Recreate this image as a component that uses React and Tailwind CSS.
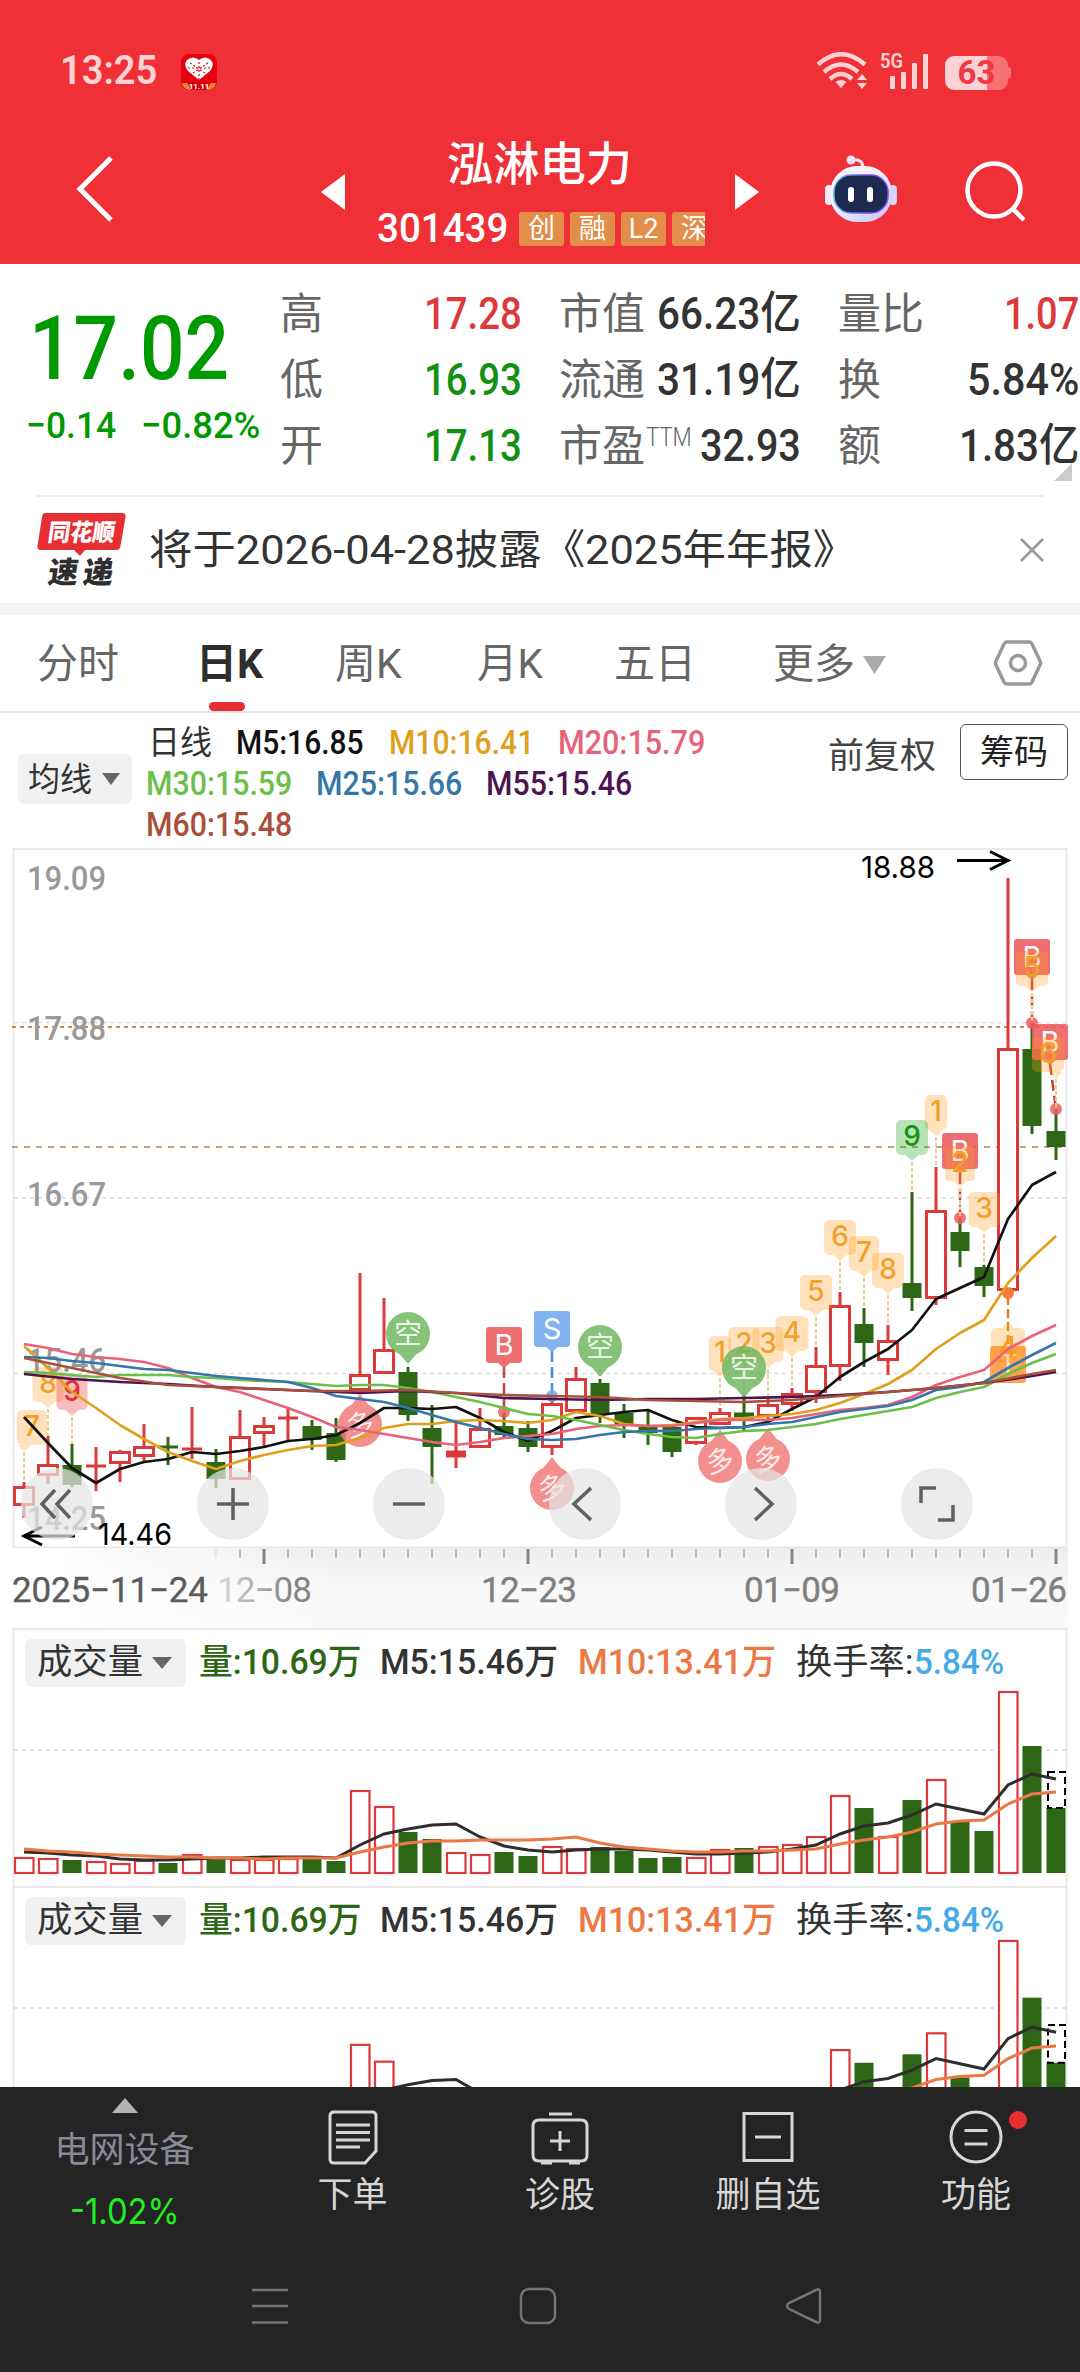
import { useLayoutEffect, useRef, useState } from 'react';
import clsx from 'clsx';

const RED = '#dc3a3a';
const GREEN = '#2d6614';

// [color, high, body top, body bottom, low]
const candles = [
  ['r', 634, 638, 658, 670], ['r', 588, 616, 628, 636], ['g', 596, 617, 637, 639], ['r', 599, 618, 618, 643],
  ['r', 602, 603, 616, 634], ['r', 576, 598, 609, 613], ['g', 589, 599, 599, 617], ['r', 559, 601, 601, 611],
  ['g', 601, 614, 631, 640], ['r', 562, 588, 632, 632], ['r', 569, 577, 586, 598], ['r', 559, 570, 570, 592],
  ['g', 572, 578, 592, 602], ['g', 570, 585, 612, 614], ['r', 425, 526, 543, 543], ['r', 450, 501, 526, 526],
  ['g', 519, 524, 567, 573], ['g', 557, 580, 599, 636], ['r', 572, 604, 608, 620], ['r', 560, 580, 600, 600],
  ['g', 565, 578, 587, 591], ['g', 573, 580, 599, 604], ['r', 552, 555, 600, 607], ['r', 519, 530, 564, 564],
  ['g', 531, 535, 566, 575], ['g', 556, 565, 576, 590], ['g', 562, 579, 585, 597], ['g', 579, 579, 604, 609],
  ['r', 569, 569, 596, 597], ['r', 560, 564, 577, 577], ['g', 548, 566, 570, 582], ['r', 551, 556, 569, 577],
  ['r', 540, 545, 557, 563], ['r', 499, 517, 545, 555], ['r', 444, 457, 519, 533], ['g', 460, 476, 495, 519],
  ['r', 477, 492, 513, 527], ['g', 344, 435, 450, 463], ['r', 319, 362, 451, 457], ['g', 370, 384, 403, 419],
  ['g', 417, 419, 438, 449], ['r', 30, 200, 443, 444], ['g', 175, 201, 278, 286], ['g', 261, 283, 299, 312],
];

const maLines = [
  { color: '#111111', ys: [569, 595, 620, 635, 621, 614, 611, 604, 606, 603, 599, 593, 591, 587, 575, 560, 560, 561, 559, 570, 584, 593, 583, 570, 567, 564, 562, 572, 579, 580, 579, 574, 561, 549, 529, 514, 501, 482, 451, 440, 429, 371, 337, 324] },
  { color: '#e0a01e', ys: [498, 520, 544, 560, 577, 591, 604, 613, 621, 613, 607, 602, 598, 597, 590, 580, 576, 576, 573, 572, 573, 575, 572, 564, 568, 576, 578, 577, 574, 571, 570, 568, 566, 562, 555, 546, 536, 522, 501, 485, 472, 435, 410, 388] },
  { color: '#e8637a', ys: [496, 500, 506, 509, 511, 514, 520, 530, 539, 544, 552, 560, 569, 579, 582, 586, 590, 594, 597, 594, 590, 588, 586, 581, 578, 577, 578, 578, 575, 572, 572, 572, 570, 566, 562, 560, 557, 549, 537, 529, 522, 501, 488, 477] },
  { color: '#6cc04a', ys: [524, 525, 527, 529, 527, 527, 527, 529, 530, 532, 533, 534, 536, 538, 537, 537, 540, 544, 549, 554, 560, 566, 568, 572, 577, 582, 586, 589, 590, 586, 583, 582, 579, 576, 571, 567, 563, 559, 550, 544, 539, 526, 515, 506] },
  { color: '#3477a8', ys: [509, 510, 513, 515, 518, 521, 522, 525, 528, 530, 532, 534, 540, 548, 551, 554, 560, 567, 574, 580, 586, 591, 592, 591, 587, 584, 583, 583, 581, 580, 579, 576, 574, 569, 564, 561, 558, 552, 542, 539, 534, 520, 507, 495] },
  { color: '#4c1450', step: 2, ys: [526, 531, 534, 536, 539, 541, 543, 545, 543, 545, 550, 551, 552, 551, 551, 550, 549, 547, 544, 540, 535, 528, 524] },
  { color: '#a8503c', step: 2, ys: [510, 520, 530, 537, 539, 541, 543, 543, 542, 545, 547, 548, 549, 552, 553, 554, 552, 548, 544, 540, 535, 526, 522] },
];

const volumes = [16, 15, 13, 12, 10, 13, 10, 19, 15, 14, 14, 15, 14, 12, 83, 67, 41, 34, 21, 19, 21, 17, 27, 25, 26, 22, 15, 16, 16, 24, 25, 27, 29, 37, 78, 65, 37, 73, 94, 51, 42, 182, 127, 65];
const volMa5 = [21, 20, 18, 17, 14, 13, 13, 14, 15, 15, 16, 16, 16, 15, 28, 39, 44, 48, 49, 36, 27, 23, 21, 23, 24, 24, 23, 21, 19, 19, 20, 21, 24, 28, 39, 47, 50, 58, 69, 64, 59, 88, 99, 94];
const volMa10 = [24, 22, 21, 19, 18, 17, 16, 16, 15, 15, 14, 15, 15, 15, 21, 26, 30, 32, 32, 33, 33, 33, 34, 36, 30, 26, 24, 22, 21, 21, 22, 22, 23, 24, 29, 33, 36, 41, 49, 52, 53, 69, 79, 81];

// numbered count tags: [label, center x, top, width, line x, line end]
const counts = [
  ['7', 32, 562, 30, 24, 634], ['8', 48, 519, 31, 48, 588],
  ['1', 720, 488, 22, 720, 560], ['2', 744, 479, 31, 744, 548], ['3', 768, 479, 31, 768, 551],
  ['4', 792, 468, 33, 792, 540], ['5', 816, 427, 32, 816, 499], ['6', 840, 372, 32, 840, 444],
  ['7', 864, 388, 30, 864, 460], ['8', 888, 405, 32, 888, 477], ['1', 936, 247, 22, 936, 319],
  ['2', 960, 298, 30, 960, 370], ['3', 984, 344, 31, 984, 417],
  ['5', 1032, 103, 32, 1032, 175], ['6', 1048, 189, 32, 1056, 261],
];

const trades = [
  ['B', 504, 479, 504, 564], ['S', 552, 463, 552, 548], ['B', 960, 285, 960, 370],
  ['B', 1032, 91, 1032, 175], ['B', 1050, 176, 1056, 261],
];

const xAt = (i) => 24 + i * 24;

// squeezes or stretches one line of text to an exact width
function Fit({ w, className, children }) {
  const ref = useRef(null);
  const [scale, setScale] = useState(1);
  useLayoutEffect(() => {
    setScale(w / ref.current.offsetWidth);
  }, [w, children]);
  return (
    <span className={clsx('block shrink-0 whitespace-nowrap', className)} style={{ width: w }}>
      <span ref={ref} className="inline-block origin-left" style={{ transform: `scaleX(${scale})` }}>{children}</span>
    </span>
  );
}

function StatusBar() {
  return (
    <div className="flex h-[94px] items-end pb-1 pl-[60px] pr-[69px] text-[#ffd3d5]">
      <Fit w={97} className="text-[40px] leading-[38px] font-semibold">13:25</Fit>
      <svg className="ml-[24px] h-9 w-9 overflow-visible" viewBox="0 0 36 36">
        <rect width="36" height="36" rx="8" fill="#e60012" />
        <path d="M1 29h34a8 8 0 0 1-8 7H9a8 8 0 0 1-8-7z" fill="#f0813a" />
        <path d="M6 28h24l-4 8H10z" fill="#d8000f" />
        <path d="M18 26 7 17Q2 11 6 6q6-5 12 0 6-5 12 0 4 5-1 11z" fill="#fff" />
        <path d="M9 9l18 12M27 9 9 21M18 8v18M7 14h22" stroke="#e60012" strokeWidth="1.2" strokeDasharray="2 2" />
        <text x="18" y="35" fontSize="8" fontWeight="700" fill="#fff" textAnchor="middle">11.11</text>
      </svg>
      <svg className="ml-auto h-[38px] w-[52px]" viewBox="0 0 52 38" fill="none" stroke="#ffd3d5" strokeWidth="4.5">
        <path d="M2 12.500Q25-8 49 12.500M8 20q17-15 34 0M14 27q11-10 22 0" />
        <path d="M19.500 30q6-4 11 0l-5.500 6z" fill="#ffd3d5" stroke="none" />
        <path d="M41 28l5-6 5 6zM41 31l5 6 5-6z" fill="#ffd3d5" stroke="none" />
      </svg>
      <svg className="ml-3 h-[38px] w-[50px] overflow-visible" viewBox="0 0 50 38" fill="#ffd3d5">
        <text x="0" y="16" fontSize="21" fontWeight="600" textLength="23" lengthAdjust="spacingAndGlyphs">5G</text>
        <rect x="10" y="24" width="5" height="13" rx="1" />
        <rect x="21" y="20" width="5" height="17" rx="1" />
        <rect x="32" y="11" width="5" height="26" rx="1" />
        <rect x="43" y="2" width="5" height="35" rx="1" />
      </svg>
      <div className="ml-[15px] flex h-[34px] w-[63px] items-center justify-center rounded-[9px] bg-linear-to-r from-[#ffd3d5] from-66% to-[#f87175] to-66% text-[33px] leading-[34px] font-bold text-[#ee3a40]">63</div>
      <div className="mb-[11px] h-3 w-[3px] rounded-r bg-[#f87175]" />
    </div>
  );
}

function Header() {
  return (
    <header className="flex h-[170px] text-white">
      <svg className="mt-[61px] ml-[75px] h-[68px] w-[40px]" viewBox="0 0 40 68" fill="none" stroke="#fff" strokeWidth="5">
        <path d="M36 3 5 34l31 31" />
      </svg>
      <svg className="mt-20 ml-[206px] h-9 w-6" viewBox="0 0 24 36" fill="#fff"><path d="M24 0v36L0 18z" /></svg>
      <div className="ml-8 w-[328px] overflow-hidden">
        <div className="ml-[70px] mt-[41px]"><Fit w={185} className="text-[46px] leading-[58px] font-medium">泓淋电力</Fit></div>
        <div className="mt-[17px] flex items-center">
          <Fit w={131} className="text-[40px] leading-[38px] font-medium">301439</Fit>
          <div className="ml-[11px] flex gap-1.5 text-[27px] leading-[34px]">
            {['创', '融', 'L2', '深'].map((t) => (
              <span key={t} className="h-[34px] w-[45px] shrink-0 rounded-[3px] bg-[#e28d4a] text-center">{t}</span>
            ))}
          </div>
        </div>
      </div>
      <svg className="mt-20 ml-[30px] h-9 w-6" viewBox="0 0 24 36" fill="#fff"><path d="M0 0v36l24-18z" /></svg>
      <svg className="mt-[61px] ml-[65px] h-[70px] w-[74px]" viewBox="0 0 74 70">
        <defs>
          <linearGradient id="shell" x1="0" y1="0" x2="1" y2="1">
            <stop offset="0.4" stopColor="#f4f3ff" />
            <stop offset="1" stopColor="#bcc0f4" />
          </linearGradient>
          <linearGradient id="rim" x1="0" x2="1">
            <stop offset="0" stopColor="#5fb4dc" />
            <stop offset="0.6" stopColor="#7a4cf0" />
          </linearGradient>
        </defs>
        <path d="M28 5q11-2 11 9" fill="none" stroke="#f1e6fb" strokeWidth="3" />
        <circle cx="27" cy="5" r="4.500" fill="#efe0f5" />
        <rect x="1" y="30" width="8" height="20" rx="4" fill="#eeeeff" />
        <rect x="65" y="30" width="8" height="20" rx="4" fill="#d6d6fa" />
        <rect x="6" y="11" width="62" height="56" rx="27" fill="url(#shell)" />
        <rect x="10" y="20" width="54" height="38" rx="17" fill="#1d2a50" stroke="url(#rim)" strokeWidth="1.500" />
        <rect x="24" y="32" width="6" height="15" rx="3" fill="#fff" />
        <rect x="43" y="32" width="6" height="15" rx="3" fill="#fff" />
      </svg>
      <svg className="mt-[65px] ml-[66px] h-[64px] w-[64px]" viewBox="0 0 64 64" fill="none" stroke="#fff" strokeWidth="4.500">
        <circle cx="30" cy="31" r="26.500" />
        <path d="M48 49l12 12" />
      </svg>
    </header>
  );
}

function Quote() {
  const cell = 'text-[45px] leading-[66px] font-medium';
  const label = 'w-[86px] text-[43px] leading-[66px] text-[#666]';
  return (
    <section className="relative flex h-[231px] pt-[17px] text-[#333]">
      <div className="w-[280px] pt-4 text-[#009900]">
        <Fit w={200} className="ml-[29px] text-[89px] leading-[104px] font-medium">17.02</Fit>
        <div className="mt-[5px] flex text-[37px] leading-10 font-medium">
          <Fit w={90} className="ml-[26px]">−0.14</Fit>
          <Fit w={119} className="ml-[25px]">−0.82%</Fit>
        </div>
      </div>
      <div className={label}>
        <div>高</div><div>低</div><div>开</div>
      </div>
      <div className={clsx('ml-[58px] text-[#119011]', cell)}>
        <Fit w={98} className="text-[#dc3a3a]">17.28</Fit>
        <Fit w={98}>16.93</Fit>
        <Fit w={98}>17.13</Fit>
      </div>
      <div className="ml-[37px] w-[242px]">
        <div className="flex"><span className={label}>市值</span><Fit w={144} className={clsx('ml-auto', cell)}>66.23亿</Fit></div>
        <div className="flex"><span className={label}>流通</span><Fit w={144} className={clsx('ml-auto', cell)}>31.19亿</Fit></div>
        <div className="flex">
          <span className={label}>市盈</span>
          <Fit w={46} className="ml-px text-[25px] leading-[50px] font-light text-[#666]">TTM</Fit>
          <Fit w={101} className={clsx('ml-auto', cell)}>32.93</Fit>
        </div>
      </div>
      <div className="ml-[37px] w-[241px]">
        <div className="flex"><span className={label}>量比</span><Fit w={75} className={clsx('ml-auto text-[#dc3a3a]', cell)}>1.07</Fit></div>
        <div className="flex"><span className={label}>换</span><Fit w={112} className={clsx('ml-auto', cell)}>5.84%</Fit></div>
        <div className="flex"><span className={label}>额</span><Fit w={120} className={clsx('ml-auto', cell)}>1.83亿</Fit></div>
      </div>
      <svg className="absolute top-[199px] left-[1054px] h-[18px] w-[18px]" viewBox="0 0 18 18" fill="#ccc"><path d="M18 0v18H0z" /></svg>
    </section>
  );
}

function Notice() {
  return (
    <section className="mx-9 flex h-[108px] items-start border-t-2 border-[#eee]">
      <svg className="mt-[15px] h-[82px] w-[92px] overflow-visible" viewBox="0 0 92 82">
        <path d="M9 1h77q4 0 3.500 4l-5 29q-.5 4-4.500 4H49l-5 6-6-6H5q-4 0-3.500-4L6 5q.5-4 3-4z" fill="#e62e33" />
        <g transform="skewX(-8)" fontWeight="900">
          <text x="15" y="29" fontSize="24" fill="#fff" textLength="67" lengthAdjust="spacingAndGlyphs">同花顺</text>
          <text x="21" y="71" fontSize="30" fill="#2e2e2e" textLength="65" lengthAdjust="spacing">速递</text>
        </g>
      </svg>
      <Fit w={707} className="ml-[21px] pt-5 text-[41px] leading-[66px] text-[#333]">将于2026-04-28披露《2025年年报》</Fit>
      <svg className="mt-[41px] ml-auto h-6 w-6" viewBox="0 0 24 24" stroke="#999" strokeWidth="2.500"><path d="M1 1l22 22M23 1 1 23" /></svg>
    </section>
  );
}

function Tabs() {
  return (
    <nav className="flex h-[110px] items-center border-t-[12px] border-b-2 border-t-[#f4f4f4] border-b-[#e6e6e6] pt-1 text-[41px] text-[#666]">
      <Fit w={82} className="ml-[37px]">分时</Fit>
      <div className="relative ml-[77px] font-bold text-[#2e2e2e]">
        <Fit w={67}>日K</Fit>
        <div className="absolute -bottom-[15px] left-[13px] h-[9px] w-9 rounded-full bg-[#e62e33]" />
      </div>
      <Fit w={67} className="ml-[72px]">周K</Fit>
      <Fit w={66} className="ml-[75px]">月K</Fit>
      <Fit w={82} className="ml-[71px]">五日</Fit>
      <Fit w={82} className="ml-[77px]">更多</Fit>
      <svg className="ml-2 h-[18px] w-[23px]" viewBox="0 0 23 18" fill="#aaa"><path d="M0 0h23L11.500 18z" /></svg>
      <svg className="mb-1 ml-[107px] h-12 w-[50px]" viewBox="0 0 50 48" fill="none" stroke="#999" strokeWidth="3.500">
        <path d="M14 3h22q2 0 3 2l8 17q1 2 0 4l-8 17q-1 2-3 2H14q-2 0-3-2L3 26q-1-2 0-4l8-17q1-2 3-2z" />
        <circle cx="25" cy="24" r="7.500" />
      </svg>
    </nav>
  );
}

function MaLegend() {
  return (
    <section className="flex h-[135px] text-[33px] leading-[41px] font-medium">
      <div className="mt-[41px] ml-[18px] flex h-[50px] w-[114px] items-center rounded-md bg-[#f1f1f1] font-normal text-[#333]">
        <Fit w={64} className="ml-[10px]">均线</Fit>
        <svg className="ml-[10px] h-3 w-[18px]" viewBox="0 0 18 12" fill="#666"><path d="M0 0h18L9 12z" /></svg>
      </div>
      <div className="ml-[14px] w-[600px] pt-[9px]">
        <div className="flex">
          <Fit w={64} className="ml-0.5 font-normal text-[#333]">日线</Fit>
          <Fit w={128} className="ml-[24px] text-[#111]">M5:16.85</Fit>
          <Fit w={145} className="ml-[25px] text-[#e0a01e]">M10:16.41</Fit>
          <Fit w={147} className="ml-[24px] text-[#e8637a]">M20:15.79</Fit>
        </div>
        <div className="flex">
          <Fit w={146} className="text-[#6cc04a]">M30:15.59</Fit>
          <Fit w={146} className="ml-[24px] text-[#3477a8]">M25:15.66</Fit>
          <Fit w={146} className="ml-[24px] text-[#4c1450]">M55:15.46</Fit>
        </div>
        <Fit w={146} className="text-[#a8503c]">M60:15.48</Fit>
      </div>
      <Fit w={108} className="ml-[82px] pt-[23px] text-[35px] font-normal text-[#444]">前复权</Fit>
      <div className="mt-[11px] ml-[24px] flex h-14 w-[108px] items-center justify-center rounded-md border-[1.5px] border-[#555] text-[34px] font-normal text-[#222]">筹码</div>
    </section>
  );
}

function Candle({ i, data }) {
  const [c, high, top, bottom, low] = data;
  const x = xAt(i);
  const color = c === 'r' ? RED : GREEN;
  if (bottom - top < 5) {
    return (
      <g stroke={color}>
        <path d={`M${x} ${high}V${low}`} strokeWidth="3" />
        <path d={`M${x - 10} ${(top + bottom) / 2}h20`} strokeWidth={bottom - top + 3} />
      </g>
    );
  }
  return (
    <g stroke={color} strokeWidth="3" fill="none">
      <path d={`M${x} ${high}V${top}M${x} ${bottom}V${low}`} />
      {c === 'r'
        ? <rect x={x - 9.500} y={top + 1.500} width="19" height={bottom - top - 3} fill="#fff" />
        : <rect x={x - 9.500} y={top} width="19" height={bottom - top} fill={GREEN} stroke="none" />}
    </g>
  );
}

function CountTag({ tag, fill = '#ffa01e', text = '#f2a02c' }) {
  const [label, cx, y, w, lx, end] = tag;
  return (
    <g>
      <path d={`M${lx} ${y + 42}V${end}`} stroke="#e5cf98" strokeWidth="2" strokeDasharray="4 2" />
      <rect x={cx - w / 2} y={y} width={w} height="35" rx="5" fill={fill} fillOpacity="0.3" />
      <path d={`M${lx - 7} ${y + 35}h14l-7 6z`} fill={fill} fillOpacity="0.3" />
      <text x={cx} y={y + 26} fontFamily="Inter" fontSize="28" fontWeight="500" fill={text} textAnchor="middle">{label}</text>
    </g>
  );
}

function TradeTag({ tag }) {
  const [label, cx, y, lx, end] = tag;
  const fill = label === 'B' ? '#ec5a5f' : '#6fa8ee';
  const line = label === 'B' ? '#c4413c' : '#4a90d0';
  return (
    <g>
      <path d={`M${cx} ${y + 40}L${lx} ${end}`} stroke={line} strokeWidth="2.500" strokeDasharray="11 5" />
      <circle cx={lx} cy={end} r="6" fill={fill} fillOpacity="0.85" />
      <rect x={cx - 18} y={y} width="36" height="36" rx="3" fill={fill} fillOpacity="0.88" />
      <path d={`M${cx - 6} ${y + 36}h12l-6 5z`} fill={fill} fillOpacity="0.88" />
      <text x={cx} y={y + 28} fontFamily="Inter" fontSize="29" fill="#fff" textAnchor="middle">{label}</text>
    </g>
  );
}

function Balloon({ label, x, y, up }) {
  const fill = up ? '#f27a7a' : '#6fb75e';
  const d = up ? `M${x - 11} ${y - 17}l11-14 11 14z` : `M${x - 11} ${y + 17}l11 13 11-13z`;
  return (
    <g opacity="0.84">
      <path d={d} fill={fill} />
      <circle cx={x} cy={y} r="22" fill={fill} />
      <text x={x} y={y + 10} fontSize="28" fill="#fff" fillOpacity="0.85" textAnchor="middle" transform={up ? `rotate(-12 ${x} ${y})` : undefined}>{label}</text>
    </g>
  );
}

const controls = [
  'M34 22 21 36l13 14M49 22 36 36l13 14',
  'M20 36h32M36 20v32',
  'M20 36h32',
  'M42 20 25 36l17 16',
  'M30 20l17 16-17 16',
  'M20 35V20h15M37 52h15V37',
];

function KChart() {
  const prices = [['19.09', 42], ['17.88', 192], ['16.67', 358], ['15.46', 524], ['14.25', 682]];
  return (
    <section className="relative h-[700px]">
      <svg className="block h-[700px] w-[1080px]" viewBox="0 0 1080 700">
        <path d="M13.500 1h1053v698.500h-1053z" fill="none" stroke="#e9e9e9" strokeWidth="2" />
        <g strokeWidth="1.500" strokeDasharray="4 4" stroke="#dcdcdc">
          <path d="M14 174.500h1052M14 350h1052M14 525.500h1052" />
        </g>
        <path d="M12 179h1055" stroke="#d9864d" strokeWidth="2" strokeDasharray="4 4" />
        <path d="M12 299h1055" stroke="#c4a273" strokeWidth="2" strokeDasharray="6 6" />
        {candles.map((c, i) => <Candle key={i} i={i} data={c} />)}
        {trades.map((t, i) => <TradeTag key={i} tag={t} />)}
        {counts.map((t, i) => <CountTag key={i} tag={t} />)}
        <CountTag tag={['9', 72, 527, 31, 72, 596]} fill="#e8262c" text="#e62e33" />
        <CountTag tag={['9', 912, 272, 32, 912, 344]} fill="#14a014" text="#149614" />
        <g>
          <path d="M1008 448v52" stroke="#d9822e" strokeWidth="2.500" strokeDasharray="9 4" />
          <circle cx="1008" cy="445" r="6" fill="#f77c38" />
          <rect x="990" y="498" width="36" height="37" rx="3" fill="#ff9a40" fillOpacity="0.9" />
          <text x="1008" y="527" fontFamily="Inter" fontSize="28" fill="#ffe6cc" textAnchor="middle">T</text>
          <path d="M991 485q0-5 5-5h5l7-5 7 5h5q5 0 5 5v30h-34z" fill="#ffa01e" fillOpacity="0.3" />
          <text x="1008" y="509" fontFamily="Inter" fontSize="28" fontWeight="500" fill="#f79a20" textAnchor="middle">4</text>
        </g>
        <Balloon label="空" x={408} y={486} />
        <Balloon label="空" x={600} y={499} />
        <Balloon label="空" x={744} y={520} />
        <Balloon label="多" x={360} y={577} up />
        <Balloon label="多" x={552} y={640} up />
        <Balloon label="多" x={720} y={613} up />
        <Balloon label="多" x={768} y={611} up />
        {prices.map(([p, y]) => (
          <text key={p} x="27" y={y} fontSize="34" fontWeight="500" fill="#999" textLength="79" lengthAdjust="spacingAndGlyphs">{p}</text>
        ))}
        {maLines.map(({ color, step = 1, ys }) => (
          <polyline key={color} points={ys.map((y, i) => `${xAt(Math.min(i * step, 43))},${y}`).join(' ')} fill="none" stroke={color} strokeWidth="2.700" strokeLinejoin="round" />
        ))}
        <g fontFamily="Inter" fontSize="30" fill="#000" stroke="none">
          <text x="861" y="30" textLength="74" lengthAdjust="spacingAndGlyphs">18.88</text>
          <text x="98" y="697" textLength="74" lengthAdjust="spacingAndGlyphs">14.46</text>
        </g>
        <path d="M957 12.500h51M990 3.500l18 9-18 9M75 688H25M42 679l-18 9 18 9" fill="none" stroke="#000" strokeWidth="3" />
      </svg>
      <div className="absolute top-[620px] left-[21px] flex gap-[104px]">
        {controls.map((d) => (
          <button key={d} className="h-[72px] w-[72px] rounded-full bg-[#e5e5e5]/72">
            <svg viewBox="0 0 72 72" fill="none" stroke="#606060" strokeWidth="3.5"><path d={d} /></svg>
          </button>
        ))}
      </div>
    </section>
  );
}

function DateAxis() {
  return (
    <section className="h-20">
      <svg className="block h-20 w-[1080px]" viewBox="0 0 1080 80">
        <defs>
          <linearGradient id="shade" x1="0" y1="0" x2="0" y2="1">
            <stop offset="0" stopColor="#ededed" />
            <stop offset="0.5" stopColor="#f8f8f8" />
            <stop offset="1" stopColor="#fafafa" />
          </linearGradient>
          <linearGradient id="fade" x1="0" x2="1">
            <stop offset="0.05" stopColor="#fff" />
            <stop offset="0.32" stopColor="#fff" stopOpacity="0" />
          </linearGradient>
          <linearGradient id="dateFade" gradientUnits="userSpaceOnUse" x1="215" x2="290">
            <stop offset="0" stopColor="#dedede" />
            <stop offset="1" stopColor="#858585" />
          </linearGradient>
        </defs>
        <rect x="13" width="1055" height="80" fill="url(#shade)" />
        <rect x="0" width="1068" height="80" fill="url(#fade)" />
        {candles.map((_, i) => {
          if (i < 8) return null;
          const major = i % 11 === 10;
          return <rect key={i} x={xAt(i) - (major ? 1.5 : 0.75)} y="1" width={major ? 3 : 1.5} height={major ? 15 : 9} fill={i === 8 ? '#e0e0e0' : major ? '#858585' : '#aaa'} />;
        })}
        <g fontSize="35" fill="#808080" stroke="#808080" strokeWidth="0.4">
          <text x="12" y="54" fill="#5c5c5c" stroke="#5c5c5c" textLength="196" lengthAdjust="spacing">2025−11−24</text>
          <text x="217" y="54" fill="url(#dateFade)" stroke="none" textLength="95" lengthAdjust="spacing">12−08</text>
          <text x="481" y="54" textLength="96" lengthAdjust="spacing">12−23</text>
          <text x="744" y="54" textLength="96" lengthAdjust="spacing">01−09</text>
          <text x="971" y="54" textLength="96" lengthAdjust="spacing">01−26</text>
        </g>
      </svg>
    </section>
  );
}

function VolumePanel({ k = 1, className }) {
  const base = 245;
  const line = (hs) => hs.map((h, i) => `${xAt(i)},${base - h * k}`).join(' ');
  return (
    <section className={clsx('relative overflow-hidden', className)}>
      <div className="absolute top-0 left-0">
        <svg className="block h-[258px] w-[1080px]" viewBox="0 0 1080 258">
          <path d="M13.500 258V1h1053v257" fill="none" stroke="#e9e9e9" strokeWidth="2" />
          <path d="M14 122h1052" stroke="#e2e2e2" strokeWidth="2" strokeDasharray="4 4" />
          {volumes.map((v, i) => {
            const h = v * k;
            return candles[i][0] === 'r'
              ? <rect key={i} x={xAt(i) - 9} y={base - h + 1} width="18.500" height={h - 1} fill="#fff" stroke={RED} strokeWidth="2.200" />
              : <rect key={i} x={xAt(i) - 9.500} y={base - h} width="19" height={h} fill={GREEN} />;
          })}
          <rect x="1048" y={base - 101 * k} width="17" height={36 * k} fill="none" stroke="#000" strokeWidth="2" strokeDasharray="7 4" />
          <polyline points={line(volMa5)} fill="none" stroke="#2e2e2e" strokeWidth="3" />
          <polyline points={line(volMa10)} fill="none" stroke="#ec7846" strokeWidth="3" />
        </svg>
      </div>
      <div className="relative mt-[11px] flex h-12 items-center text-[35px] font-medium text-[#333]">
        <div className="ml-[25px] flex h-12 w-[161px] items-center rounded-md bg-[#f1f1f1] font-normal">
          <Fit w={106} className="ml-[12px]">成交量</Fit>
          <svg className="ml-[9px] h-3 w-5" viewBox="0 0 20 12" fill="#666"><path d="M0 0h20L10 12z" /></svg>
        </div>
        <Fit w={163} className="ml-[13px] text-[#2d6614]">量:10.69万</Fit>
        <Fit w={178} className="ml-[18px]">M5:15.46万</Fit>
        <Fit w={198} className="ml-[20px] text-[#ec7846]">M10:13.41万</Fit>
        <Fit w={117} className="ml-[20px] font-normal">换手率:</Fit>
        <Fit w={90} className="ml-[1px] text-[#46aae6]">5.84%</Fit>
      </div>
    </section>
  );
}

function BottomBar() {
  return (
    <footer className="flex h-[285px] flex-col bg-[#242424]">
      <div className="flex h-[160px] text-[35px] leading-[50px] text-[#d6d6d6]">
        <div className="flex w-[249px] flex-col items-center pt-[11px]">
          <svg className="h-[15px] w-[26px]" viewBox="0 0 26 15" fill="#b4b4b4"><path d="M0 15h26L13 0z" /></svg>
          <Fit w={140} className="mt-[13px] text-[#8a8a99]">电网设备</Fit>
          <Fit w={110} className="mt-[10px] font-[Inter] text-[36px] text-[#22ee22]">-1.02%</Fit>
        </div>
        {['下单', '诊股', '删自选', '功能'].map((name, i) => (
          <div key={name} className={clsx('relative flex shrink-0 flex-col items-center pt-[22px]', i === 0 ? 'w-[207px]' : 'w-[208px]')}>
            <svg className="h-[58px] w-[60px]" viewBox="0 0 60 58" fill="none" stroke="#d6d6d6" strokeWidth="3">
              {i === 0 && <path d="M11 3h38q4 0 4 4v35L42 54H11q-4 0-4-4V7q0-4 4-4zM13 16h34M13 23.500h34M13 31h34M13 38h24" />}
              {i === 1 && <path d="M9 11h42q6 0 6 6v29q0 6-6 6H9q-6 0-6-6V17q0-6 6-6zM19 5h23M30 22v20M20 32h20M11 54h11M39 54h11" />}
              {i === 2 && <path d="M6 4.500h48v47H6zM17 28h26" />}
              {i === 3 && <><circle cx="30" cy="28" r="25" /><path d="M18.500 21.500h23M18.500 35h23" /></>}
            </svg>
            <div className="mt-1">{name}</div>
            {i === 3 && <div className="absolute top-6 left-[137px] h-[18px] w-[18px] rounded-full bg-[#e63030]" />}
          </div>
        ))}
      </div>
      <svg className="mt-[39px] h-10 w-[1080px]" viewBox="0 0 1080 40" fill="none" stroke="#747474" strokeWidth="2.500">
        <path d="M252 4h36M252 20h36M252 36.500h36" />
        <rect x="521" y="3" width="34" height="34" rx="8" />
        <path d="M816 4 789 17q-4 3 0 6l27 13q4 2 4-2V6q0-4-4-2z" />
      </svg>
    </footer>
  );
}

export default function App() {
  return (
    <div className="h-[2372px] w-[1080px] overflow-hidden bg-white font-[Roboto,'Noto_Sans_CJK_SC',sans-serif]">
      <div className="h-[264px] bg-[#f03037]">
        <StatusBar />
        <Header />
      </div>
      <Quote />
      <Notice />
      <Tabs />
      <MaLegend />
      <KChart />
      <DateAxis />
      <VolumePanel className="h-[258px]" />
      <VolumePanel className="h-[201px]" k={1.05} />
      <BottomBar />
    </div>
  );
}
